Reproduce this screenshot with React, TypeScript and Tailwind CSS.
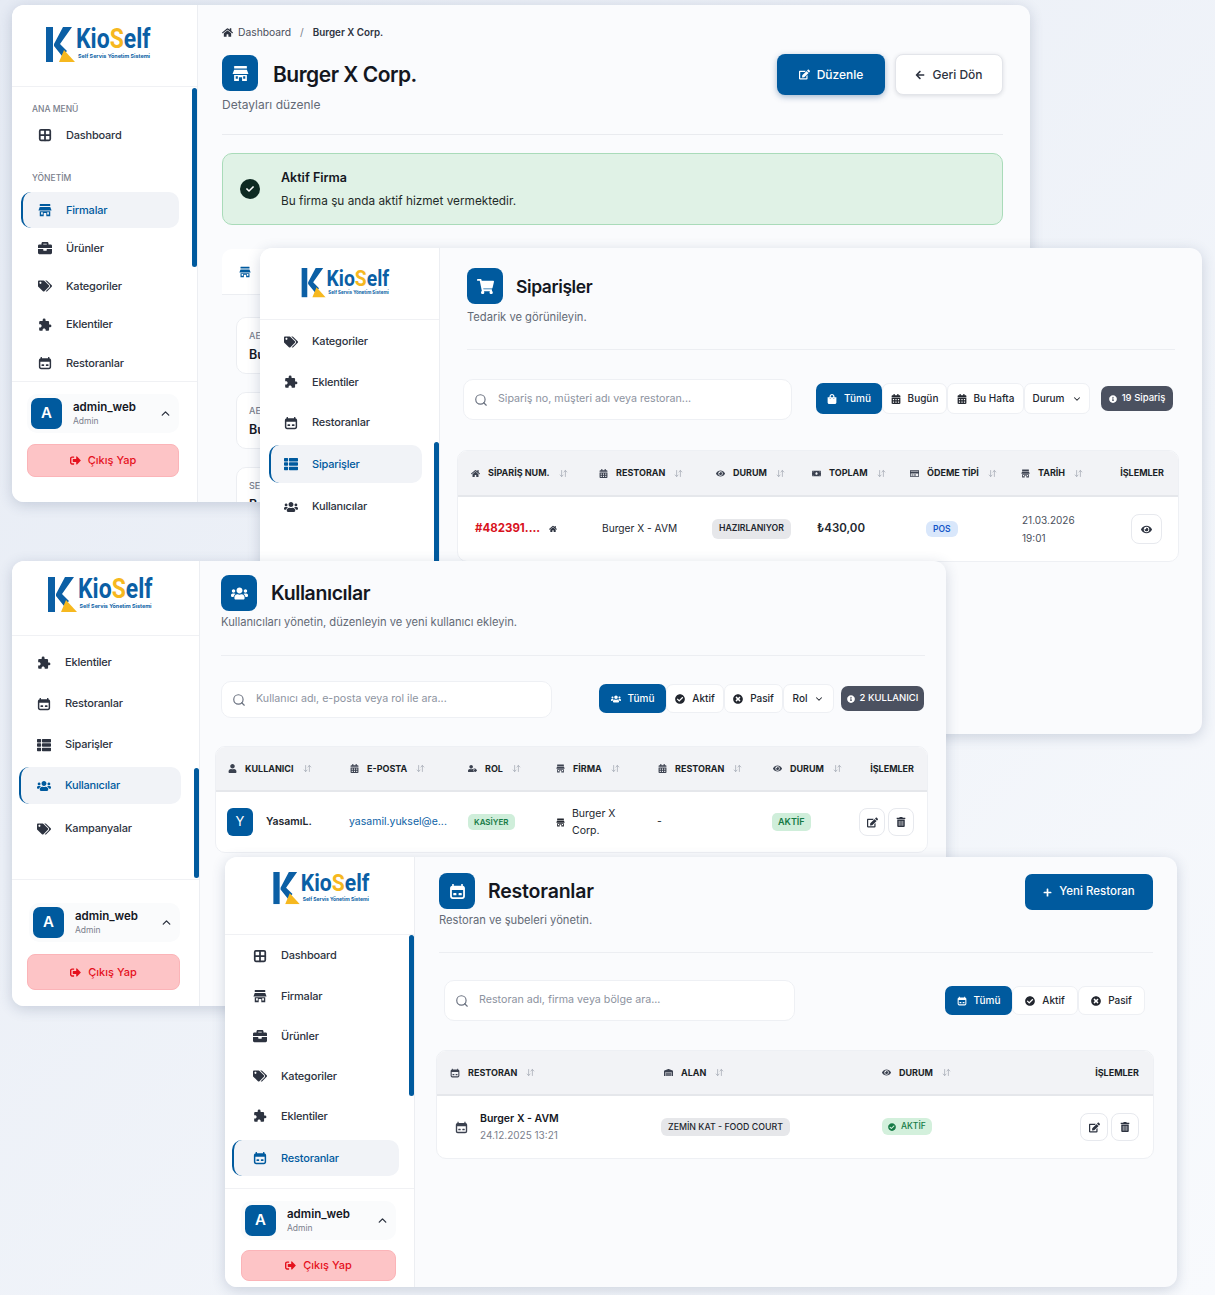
import React from 'react';
import { ArrowDownUp, ChevronDown, ChevronUp, Grid2x2, Search } from 'lucide-react';
import {
  FaArrowLeft,
  FaBriefcase,
  FaCalendarAlt,
  FaCheck,
  FaCheckCircle,
  FaEdit,
  FaEye,
  FaHome,
  FaInfoCircle,
  FaMoneyBill,
  FaPlus,
  FaRegCreditCard,
  FaShoppingBag,
  FaShoppingCart,
  FaSignOutAlt,
  FaTags,
  FaThList,
  FaTimesCircle,
  FaTrashAlt,
  FaUser,
  FaUserTag,
  FaUsers,
  FaWarehouse,
} from 'react-icons/fa';
import { MdExtension } from 'react-icons/md';

const RestoIcon: React.FC<{ className?: string }> = ({ className }) => (
  <svg viewBox="0 0 16 16" className={className} fill="currentColor">
    <path d="M3 1h1.5v1.500h7V1H13v1.500c1 .2 2 1 2 2.500v7.500c0 1.400-1 2.500-2.500 2.500h-9C2 15 1 13.900 1 12.500V5c0-1.500 1-2.300 2-2.500V1zm-.3 5.500v6c0 .5.4.8.8.8h9c.4 0 .8-.3.8-.8v-6H2.700z" />
    <rect x="4" y="9.500" width="3" height="2" rx=".5" />
    <rect x="9" y="9.500" width="3" height="2" rx=".5" />
  </svg>
);

// awning on top, two openings below
const FirmIcon: React.FC<{ className?: string }> = ({ className = 'h-[1em] w-[1em]' }) => (
  <svg viewBox="0 0 16 16" className={className} fill="currentColor">
    <rect x="2" y="1" width="12" height="2.400" rx=".4" />
    <path d="M2 4.500h12L15.500 8.500h-15z" />
    <path fillRule="evenodd" d="M2 9.500h12V15H9.500v-3.500h-3V15H2V9.500zm1.500 1v2.500h2v-2.500h-2zm7 0v2.500h2v-2.500h-2z" />
  </svg>
);

const Logo = () => (
  <div className="flex items-start">
    <svg viewBox="0 0 30 35" className="h-[35px] w-[30px] shrink-0">
      <rect x="0" y="0" width="7" height="35" fill="#0b5fa5" />
      <polygon points="26,0 17,0 8,17 8,19 16,29 21,24 14,17" fill="#0b5fa5" />
      <polygon points="18,23 29,35 13,35" fill="#f6b81f" />
    </svg>
    <div className="w-[75px]">
      <div className="h-[24px] origin-left scale-x-[0.85] whitespace-nowrap font-['Roboto',sans-serif] text-[27px] leading-[24px] font-bold text-[#0b5fa5]">
        Kio<span className="text-[#f6b81f]">S</span>elf
      </div>
      <div className="mt-[2px] pl-[2px] text-[5.400px] leading-[7px] font-bold whitespace-nowrap text-[#0b5fa5]">Self Servis Yönetim Sistemi</div>
    </div>
  </div>
);

const NavItem: React.FC<{ icon: React.ReactNode; label: string; active?: boolean; rowClass: string }> = ({ icon, label, active, rowClass }) => (
  <div
    className={`flex items-center gap-[14px] rounded-[10px] text-[11px] font-medium tracking-[-0.2px] ${rowClass} ${
      active ? 'border-l-2 border-[#005a9e] bg-[#f1f3f7] text-[#005a9e]' : 'text-[#2d3340]'
    }`}
  >
    <span className="flex w-[14px] justify-center text-[14px]">{icon}</span>
    {label}
  </div>
);

const UserBox = () => (
  <div className="flex items-center rounded-[10px] bg-[#fafbfc] px-[4px] py-[4px]">
    <div className="flex h-[31px] w-[31px] items-center justify-center rounded-[7px] bg-[#005a9e] text-[15px] font-semibold text-white">A</div>
    <div className="ml-[11px] flex-1">
      <div className="text-[11.500px] leading-[15px] font-semibold text-[#14171f]">admin_web</div>
      <div className="text-[8.500px] leading-[13px] text-[#7a808c]">Admin</div>
    </div>
    <ChevronUp className="mr-[3px] h-[13px] w-[13px] text-[#2d3340]" strokeWidth={2.500} />
  </div>
);

const LogoutButton: React.FC<{ className: string }> = ({ className }) => (
  <div className={`flex items-center justify-center gap-[7px] rounded-[8px] border border-[#fbb4b8] bg-[#fdc4c6] text-[11px] font-medium text-[#e5111d] ${className}`}>
    <FaSignOutAlt className="text-[11px]" />
    Çıkış Yap
  </div>
);

const Thumb: React.FC<{ className: string }> = ({ className }) => <div className={`absolute w-[5px] rounded-full bg-[#005a9e] ${className}`} />;

const PageIcon: React.FC<{ icon: React.ReactNode }> = ({ icon }) => (
  <div className="flex h-[36px] w-[36px] shrink-0 items-center justify-center rounded-[8px] bg-[#005a9e] text-[17px] text-white">{icon}</div>
);

const SearchBox: React.FC<{ placeholder: string; className: string }> = ({ placeholder, className }) => (
  <div className={`flex items-center rounded-[10px] border border-[#eef0f4] bg-white pl-[10px] text-[10.700px] text-[#8d93a0] ${className}`}>
    <Search className="mr-[10px] h-[14px] w-[14px] text-[#6b7280]" />
    {placeholder}
  </div>
);

const Tab: React.FC<{ icon?: React.ReactNode; label: string; active?: boolean; className: string; chevron?: boolean }> = ({ icon, label, active, className, chevron }) => (
  <div
    className={`flex items-center justify-center gap-[7px] rounded-[7px] text-[10px] font-medium ${className} ${
      active ? 'bg-[#005a9e] text-white' : 'border border-[#eef0f4] bg-white text-[#23272f]'
    }`}
  >
    {icon && <span className="text-[10px]">{icon}</span>}
    {label}
    {chevron && <ChevronDown className="h-[10px] w-[10px]" strokeWidth={2.500} />}
  </div>
);

const CountBadge: React.FC<{ label: string; className: string }> = ({ label, className }) => (
  <div className={`flex items-center justify-center gap-[5px] rounded-[7px] bg-[#4b5160] text-[9.500px] font-medium text-white ${className}`}>
    <FaInfoCircle className="text-[8px]" />
    {label}
  </div>
);

const Th: React.FC<{ icon?: React.ReactNode; label: string }> = ({ icon, label }) => (
  <div className="flex items-center text-[9px] font-bold whitespace-nowrap text-[#1b1f27]">
    <span className="mr-[8px] flex w-[10px] justify-center text-[9px] text-[#3c4250]">{icon}</span>
    {label}
    <ArrowDownUp className="ml-[9px] h-[9px] w-[9px] text-[#a3a8b3]" />
  </div>
);

const IconButton: React.FC<{ icon: React.ReactNode; className: string }> = ({ icon, className }) => (
  <div className={`flex items-center justify-center rounded-[8px] border border-[#e7e9ee] bg-white text-[#2d3340] ${className}`}>{icon}</div>
);

const Window: React.FC<{ className: string; children: React.ReactNode }> = ({ className, children }) => (
  <section className={`absolute flex overflow-hidden rounded-[12px] bg-[#fafbfd] shadow-[0_3px_14px_rgba(45,65,105,0.2)] ${className}`}>{children}</section>
);

const CompanyWindow = () => (
  <Window className="top-[5px] left-[12px] z-10 h-[497px] w-[1018px]">
    <aside className="relative flex w-[186px] shrink-0 flex-col border-r border-[#eceef2] bg-white">
      <div className="flex h-[82px] items-start justify-center border-b border-[#f0f1f4] pt-[22px] pr-[12px]">
        <Logo />
      </div>
      <Thumb className="top-[83px] right-0 h-[179px]" />
      <div className="mt-[17px] pl-[20px] text-[8.500px] leading-[10px] font-medium text-[#7a808c]">ANA MENÜ</div>
      <div className="pr-[18px] pl-[8px]">
        <NavItem icon={<Grid2x2 className="h-[14px] w-[14px]" strokeWidth={3} />} label="Dashboard" rowClass="mt-[6px] h-[30px] pl-[18px]" />
      </div>
      <div className="mt-[23px] pl-[20px] text-[8.500px] leading-[10px] font-medium text-[#7a808c]">YÖNETİM</div>
      <div className="flex flex-col pr-[18px] pl-[9px]">
        <NavItem icon={<FirmIcon />} label="Firmalar" active rowClass="mt-[9px] h-[36px] pl-[15px]" />
        <NavItem icon={<FaBriefcase />} label="Ürünler" rowClass="mt-[1px] h-[38px] pl-[17px]" />
        <NavItem icon={<FaTags />} label="Kategoriler" rowClass="h-[38px] pl-[17px]" />
        <NavItem icon={<MdExtension />} label="Eklentiler" rowClass="h-[39px] pl-[17px]" />
        <NavItem icon={<RestoIcon className="h-[14px] w-[14px]" />} label="Restoranlar" rowClass="h-[38px] pl-[17px]" />
      </div>
      <div className="mt-[-1px] border-t border-[#f0f1f4] pt-[12px] pr-[18px] pl-[15px]">
        <UserBox />
        <LogoutButton className="mt-[11px] h-[33px]" />
      </div>
    </aside>
    <main className="flex-1 px-[24px] pt-[21px]">
      <div className="flex items-center text-[10.300px] leading-[13px] text-[#4a505c]">
        <FaHome className="mr-[5px] text-[11px] text-[#2d3340]" />
        Dashboard
        <span className="mx-[9px] text-[#7a808c]">/</span>
        <span className="text-[9.800px] font-semibold text-[#2d3340]">Burger X Corp.</span>
      </div>
      <div className="mt-[15px] flex items-start justify-between pr-[3px]">
        <div className="pt-[1px]">
          <div className="flex items-center gap-[15px]">
            <PageIcon icon={<FirmIcon />} />
            <h1 className="h-[36px] text-[21px] leading-[40px] font-semibold tracking-[-0.5px] text-[#14171f]">Burger X Corp.</h1>
          </div>
          <p className="mt-[6px] text-[12px] leading-[16px] text-[#636a76]">Detayları düzenle</p>
        </div>
        <div className="flex gap-[10px]">
          <div className="flex h-[41px] w-[108px] items-center justify-center gap-[7px] rounded-[8px] bg-[#005a9e] text-[12px] font-medium text-white shadow-[0_2px_6px_rgba(0,60,120,0.35)]">
            <FaEdit className="text-[11px]" />
            Düzenle
          </div>
          <div className="flex h-[41px] w-[108px] items-center justify-center gap-[7px] rounded-[8px] border border-[#e3e5ea] bg-white text-[12px] font-medium text-[#2d3340] shadow-[0_1px_4px_rgba(40,50,70,0.15)]">
            <FaArrowLeft className="text-[10px]" />
            Geri Dön
          </div>
        </div>
      </div>
      <div className="mt-[21px] mr-[3px] border-t border-[#e9ebef]" />
      <div className="mt-[18px] mr-[3px] flex h-[72px] items-center rounded-[10px] border border-[#a9dbb9] bg-[#e0f2e6] pl-[17px]">
        <div className="flex h-[20px] w-[20px] items-center justify-center rounded-full bg-[#0e2a22] text-[8px] text-white">
          <FaCheck />
        </div>
        <div className="ml-[21px]">
          <div className="text-[12.500px] leading-[18px] font-semibold text-[#14171f]">Aktif Firma</div>
          <div className="mt-[5px] text-[11.800px] leading-[18px] text-[#1f2a28]">Bu firma şu anda aktif hizmet vermektedir.</div>
        </div>
      </div>
      <div className="mt-[24px] flex h-[46px] w-[400px] items-center rounded-t-[10px] border-b border-[#eceef2] bg-white pl-[17px] text-[12px] text-[#005a9e]">
        <FirmIcon />
      </div>
      <div className="mt-[22px] ml-[14px] flex w-[300px] flex-col gap-[18px]">
        {['AE', 'AE', 'SE'].map((label, i) => (
          <div key={i} className="h-[57px] rounded-[10px] border border-[#eceef2] bg-white pt-[11px] pl-[12px]">
            <div className="text-[9px] leading-[13px] font-medium text-[#7a808c]">{label}</div>
            <div className="mt-[5px] text-[12.500px] leading-[16px] font-semibold text-[#14171f]">Bu</div>
          </div>
        ))}
      </div>
    </main>
  </Window>
);

const OrdersWindow = () => (
  <Window className="top-[248px] left-[260px] z-20 h-[486px] w-[942px]">
    <aside className="relative flex w-[180px] shrink-0 flex-col border-r border-[#eceef2] bg-white">
      <div className="flex h-[72px] items-start justify-center border-b border-[#f0f1f4] pt-[20px] pr-[8px]">
        <div className="origin-top scale-[0.84]">
          <Logo />
        </div>
      </div>
      <Thumb className="top-[194px] right-0 h-[292px]" />
      <div className="mt-[1px] flex flex-col pr-[17px] pl-[9px]">
        <NavItem icon={<FaTags />} label="Kategoriler" rowClass="h-[41px] pl-[15px]" />
        <NavItem icon={<MdExtension />} label="Eklentiler" rowClass="h-[40px] pl-[15px]" />
        <NavItem icon={<RestoIcon className="h-[14px] w-[14px]" />} label="Restoranlar" rowClass="h-[41px] pl-[15px]" />
        <NavItem icon={<FaThList />} label="Siparişler" active rowClass="mt-[2px] h-[38px] pl-[13px]" />
        <NavItem icon={<FaUsers />} label="Kullanıcılar" rowClass="mt-[3px] h-[41px] pl-[15px]" />
      </div>
    </aside>
    <main className="flex-1 pt-[20px] pl-[27px]">
      <div className="flex items-center gap-[13px]">
        <PageIcon icon={<FaShoppingCart />} />
        <h1 className="h-[36px] text-[17.500px] leading-[38px] font-semibold tracking-[-0.4px] text-[#14171f]">Siparişler</h1>
      </div>
      <p className="mt-[5px] text-[11.200px] leading-[16px] text-[#636a76]">Tedarik ve görünileyin.</p>
      <div className="mt-[24px] mr-[27px] border-t border-[#eceef2]" />
      <div className="mt-[29px] mr-[29px] ml-[-4px] flex items-center">
        <SearchBox placeholder="Sipariş no, müşteri adı veya restoran..." className="h-[41px] w-[329px]" />
        <div className="mb-[2px] ml-[24px] flex items-center">
          <Tab icon={<FaShoppingBag />} label="Tümü" active className="h-[31px] w-[66px]" />
          <Tab icon={<FaCalendarAlt />} label="Bugün" className="h-[31px] w-[65px]" />
          <Tab icon={<FaCalendarAlt />} label="Bu Hafta" className="h-[31px] w-[77px]" />
          <Tab label="Durum" chevron className="h-[31px] w-[66px]" />
        </div>
        <CountBadge label="19 Sipariş" className="mb-[2px] ml-[11px] h-[25px] w-[72px]" />
      </div>
      <div className="mt-[30px] mr-[23px] ml-[-10px] overflow-hidden rounded-[10px] border border-[#eef0f4] bg-white">
        <div className="grid h-[46px] grid-cols-[128px_117px_96px_98px_111px_92px_1fr] items-center border-b-2 border-[#e5e7eb] bg-[#f2f3f6] pr-[14px] pl-[12px]">
          <Th icon={<FaHome />} label="SİPARİŞ NUM." />
          <Th icon={<FaCalendarAlt />} label="RESTORAN" />
          <Th icon={<FaEye />} label="DURUM" />
          <Th icon={<FaMoneyBill />} label="TOPLAM" />
          <Th icon={<FaRegCreditCard />} label="ÖDEME TİPİ" />
          <Th icon={<FirmIcon />} label="TARİH" />
          <div className="text-right text-[9px] font-bold text-[#1b1f27]">İŞLEMLER</div>
        </div>
        <div className="grid h-[64px] grid-cols-[127px_111px_104px_109px_96px_1fr_31px] items-center pr-[16px] pl-[17px] text-[10.200px] text-[#23272f]">
          <div className="flex items-center text-[11.500px] font-bold text-[#d8121d]">
            #482391....
            <FaHome className="ml-[9px] text-[8px] text-[#2d3340]" />
          </div>
          <div>Burger X - AVM</div>
          <div>
            <span className="ml-[-1px] inline-block rounded-[6px] bg-[#e6e7ea] px-[7px] py-[3px] text-[8.700px] font-semibold">HAZIRLANIYOR</span>
          </div>
          <div className="text-[11.500px] font-semibold">₺430,00</div>
          <div>
            <span className="inline-block rounded-[6px] bg-[#d9e7fb] px-[7px] py-[2px] text-[8.500px] font-semibold text-[#1556c8]">POS</span>
          </div>
          <div className="text-[10px] leading-[18px] text-[#4a505c]">
            21.03.2026
            <br />
            19:01
          </div>
          <IconButton icon={<FaEye className="text-[11px]" />} className="h-[30px] w-[31px]" />
        </div>
      </div>
    </main>
  </Window>
);

const UsersWindow = () => (
  <Window className="top-[561px] left-[12px] z-30 h-[445px] w-[934px]">
    <aside className="relative flex w-[188px] shrink-0 flex-col border-r border-[#eceef2] bg-white">
      <div className="flex h-[75px] items-start justify-center border-b border-[#f0f1f4] pt-[16px] pr-[11px]">
        <Logo />
      </div>
      <Thumb className="top-[207px] right-0 h-[110px]" />
      <div className="mt-[6px] flex flex-col pr-[18px] pl-[7px]">
        <NavItem icon={<MdExtension />} label="Eklentiler" rowClass="h-[41px] pl-[18px]" />
        <NavItem icon={<RestoIcon className="h-[14px] w-[14px]" />} label="Restoranlar" rowClass="h-[41px] pl-[18px]" />
        <NavItem icon={<FaThList />} label="Siparişler" rowClass="h-[41px] pl-[18px]" />
        <NavItem icon={<FaUsers />} label="Kullanıcılar" active rowClass="mt-[2px] h-[37px] pl-[16px]" />
        <NavItem icon={<FaTags />} label="Kampanyalar" rowClass="mt-[3px] h-[43px] pl-[18px]" />
      </div>
      <div className="mt-[29px] border-t border-[#f0f1f4] pt-[23px] pr-[19px] pl-[15px]">
        <div className="pl-[2px]">
          <UserBox />
        </div>
        <LogoutButton className="mt-[12px] h-[36px]" />
      </div>
    </aside>
    <main className="flex-1 pt-[14px] pl-[21px]">
      <div className="flex items-center gap-[14px]">
        <PageIcon icon={<FaUsers />} />
        <h1 className="text-[19.500px] leading-[36px] font-semibold tracking-[-0.4px] text-[#14171f]">Kullanıcılar</h1>
      </div>
      <p className="mt-[3px] text-[11.200px] leading-[16px] text-[#636a76]">Kullanıcıları yönetin, düzenleyin ve yeni kullanıcı ekleyin.</p>
      <div className="mt-[25px] mr-[21px] border-t border-[#eceef2]" />
      <div className="mt-[25px] mr-[22px] flex items-center">
        <SearchBox placeholder="Kullanıcı adı, e-posta veya rol ile ara..." className="h-[37px] w-[331px]" />
        <div className="mb-[2px] ml-[47px] flex items-center">
          <Tab icon={<FaUsers />} label="Tümü" active className="h-[29px] w-[67px]" />
          <Tab icon={<FaCheckCircle />} label="Aktif" className="h-[29px] w-[58px]" />
          <Tab icon={<FaTimesCircle />} label="Pasif" className="h-[29px] w-[59px]" />
          <Tab label="Rol" chevron className="h-[29px] w-[51px]" />
        </div>
        <CountBadge label="2 KULLANICI" className="mb-[2px] ml-[7px] h-[25px] w-[83px] text-[8.500px]" />
      </div>
      <div className="mt-[28px] mr-[18px] ml-[-6px] overflow-hidden rounded-[10px] border border-[#eef0f4] bg-white">
        <div className="grid h-[45px] grid-cols-[122px_118px_88px_102px_115px_1fr] items-center border-b-2 border-[#e5e7eb] bg-[#f2f3f6] pr-[13px] pl-[11px]">
          <Th icon={<FaUser />} label="KULLANICI" />
          <Th icon={<FaCalendarAlt />} label="E-POSTA" />
          <Th icon={<FaUserTag />} label="ROL" />
          <Th icon={<FirmIcon />} label="FİRMA" />
          <Th icon={<FaCalendarAlt />} label="RESTORAN" />
          <div className="flex items-center justify-between">
            <Th icon={<FaEye />} label="DURUM" />
            <span className="text-[9px] font-bold text-[#1b1f27]">İŞLEMLER</span>
          </div>
        </div>
        <div className="grid h-[60px] grid-cols-[122px_119px_88px_101px_115px_1fr] items-center pr-[13px] pl-[11px] text-[10.500px] text-[#23272f]">
          <div className="flex items-center gap-[13px]">
            <div className="flex h-[28px] w-[26px] items-center justify-center rounded-[6px] bg-[#005a9e] text-[13px] text-white">Y</div>
            <span className="font-semibold">YasamıL.</span>
          </div>
          <div className="text-[#0b5fa5]">yasamil.yuksel@e...</div>
          <div>
            <span className="inline-block rounded-[5px] bg-[#cfeeda] px-[6px] py-[2px] text-[8px] font-semibold text-[#157a45]">KASİYER</span>
          </div>
          <div className="flex items-center gap-[7px]">
            <FirmIcon className="h-[9px] w-[9px]" />
            <span className="w-[56px] leading-[17px]">Burger X Corp.</span>
          </div>
          <div>-</div>
          <div className="flex items-center justify-between">
            <span className="inline-block rounded-[5px] bg-[#cfeeda] px-[6px] py-[2px] text-[9px] font-semibold text-[#157a45]">AKTİF</span>
            <div className="flex gap-[3px]">
              <IconButton icon={<FaEdit className="text-[11px]" />} className="h-[28px] w-[26px]" />
              <IconButton icon={<FaTrashAlt className="text-[10px]" />} className="h-[28px] w-[26px]" />
            </div>
          </div>
        </div>
      </div>
    </main>
  </Window>
);

const RestaurantsWindow = () => (
  <Window className="top-[857px] left-[225px] z-40 h-[430px] w-[952px]">
    <aside className="relative flex w-[190px] shrink-0 flex-col border-r border-[#eceef2] bg-white">
      <div className="flex h-[78px] items-start justify-center border-b border-[#f0f1f4] pt-[15px] pl-[3px]">
        <div className="origin-top scale-[0.92]">
          <Logo />
        </div>
      </div>
      <Thumb className="top-[78px] right-0 h-[161px]" />
      <div className="flex flex-col pr-[15px] pl-[7px]">
        <NavItem icon={<Grid2x2 className="h-[14px] w-[14px]" strokeWidth={3} />} label="Dashboard" rowClass="h-[41px] pl-[21px]" />
        <NavItem icon={<FirmIcon />} label="Firmalar" rowClass="h-[40px] pl-[21px]" />
        <NavItem icon={<FaBriefcase />} label="Ürünler" rowClass="h-[40px] pl-[21px]" />
        <NavItem icon={<FaTags />} label="Kategoriler" rowClass="h-[40px] pl-[21px]" />
        <NavItem icon={<MdExtension />} label="Eklentiler" rowClass="h-[40px] pl-[21px]" />
        <NavItem icon={<RestoIcon className="h-[14px] w-[14px]" />} label="Restoranlar" active rowClass="mt-[4px] h-[36px] pl-[19px]" />
      </div>
      <div className="mt-[12px] border-t border-[#f0f1f4] pt-[12px] pr-[18px] pl-[16px]">
        <UserBox />
        <LogoutButton className="mt-[10px] h-[31px]" />
      </div>
    </aside>
    <main className="flex-1 pt-[16px] pl-[24px]">
      <div className="flex items-start justify-between pr-[24px]">
        <div>
          <div className="flex items-center gap-[13px]">
            <PageIcon icon={<RestoIcon className="h-[17px] w-[17px]" />} />
            <h1 className="text-[19.500px] leading-[36px] font-semibold tracking-[-0.2px] text-[#14171f]">Restoranlar</h1>
          </div>
          <p className="mt-[3px] text-[11.200px] leading-[16px] text-[#636a76]">Restoran ve şubeleri yönetin.</p>
        </div>
        <div className="mt-[1px] flex h-[36px] w-[128px] items-center justify-center gap-[7px] rounded-[7px] bg-[#005a9e] text-[11.500px] font-medium text-white">
          <FaPlus className="text-[9px]" />
          Yeni Restoran
        </div>
      </div>
      <div className="mt-[24px] mr-[24px] border-t border-[#eceef2]" />
      <div className="mt-[27px] mr-[32px] ml-[5px] flex items-center justify-between">
        <SearchBox placeholder="Restoran adı, firma veya bölge ara..." className="h-[41px] w-[351px]" />
        <div className="flex items-center">
          <Tab icon={<RestoIcon className="h-[10px] w-[10px]" />} label="Tümü" active className="h-[29px] w-[67px]" />
          <Tab icon={<FaCheckCircle />} label="Aktif" className="h-[29px] w-[66px]" />
          <Tab icon={<FaTimesCircle />} label="Pasif" className="h-[29px] w-[67px]" />
        </div>
      </div>
      <div className="mt-[29px] mr-[23px] ml-[-3px] overflow-hidden rounded-[10px] border border-[#eef0f4] bg-white">
        <div className="grid h-[45px] grid-cols-[213px_218px_1fr_60px] items-center border-b-2 border-[#e5e7eb] bg-[#f2f3f6] pr-[14px] pl-[13px]">
          <Th icon={<RestoIcon className="h-[10px] w-[10px]" />} label="RESTORAN" />
          <Th icon={<FaWarehouse />} label="ALAN" />
          <Th icon={<FaEye />} label="DURUM" />
          <div className="text-right text-[9px] font-bold text-[#1b1f27]">İŞLEMLER</div>
        </div>
        <div className="grid h-[62px] grid-cols-[206px_221px_1fr_59px] items-center pr-[14px] pl-[18px] text-[10.500px] text-[#23272f]">
          <div className="flex items-center gap-[12px]">
            <RestoIcon className="h-[13px] w-[13px] text-[#3c4250]" />
            <div>
              <div className="text-[10.500px] leading-[17px] font-semibold text-[#14171f]">Burger X - AVM</div>
              <div className="text-[10px] leading-[17px] text-[#7a808c]">24.12.2025 13:21</div>
            </div>
          </div>
          <div>
            <span className="inline-block rounded-[6px] bg-[#e6e7ea] px-[7px] py-[2px] text-[8.800px] font-medium">ZEMİN KAT - FOOD COURT</span>
          </div>
          <div>
            <span className="inline-flex items-center gap-[5px] rounded-[6px] bg-[#d3f0dc] px-[6px] py-[2px] text-[8.500px] font-medium text-[#157a45]">
              <FaCheckCircle className="text-[8px]" />
              AKTİF
            </span>
          </div>
          <div className="flex gap-[3px]">
            <IconButton icon={<FaEdit className="text-[11px]" />} className="h-[28px] w-[28px]" />
            <IconButton icon={<FaTrashAlt className="text-[10px]" />} className="h-[28px] w-[28px]" />
          </div>
        </div>
      </div>
    </main>
  </Window>
);

export default function App() {
  return (
    <div className="relative h-[1295px] w-[1215px] overflow-hidden bg-gradient-to-br from-[#e6ebf4] to-[#f8fafd] font-['Inter',sans-serif]">
      <CompanyWindow />
      <OrdersWindow />
      <UsersWindow />
      <RestaurantsWindow />
    </div>
  );
}
